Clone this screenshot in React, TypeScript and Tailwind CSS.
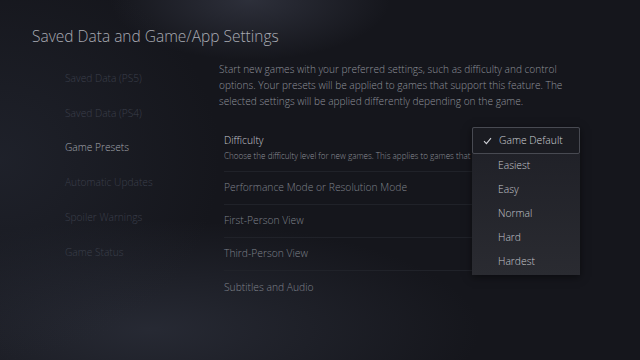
import React from "react";

const nav = [
  { label: "Saved Data (PS5)", active: false },
  { label: "Saved Data (PS4)", active: false },
  { label: "Game Presets", active: true },
  { label: "Automatic Updates", active: false },
  { label: "Spoiler Warnings", active: false },
  { label: "Game Status", active: false },
];

const rows = [
  "Performance Mode or Resolution Mode",
  "First-Person View",
  "Third-Person View",
  "Subtitles and Audio",
];

const options = ["Easiest", "Easy", "Normal", "Hard", "Hardest"];

export default function App() {
  return (
    <div
      className="relative w-[640px] h-[360px] overflow-hidden bg-[#15161c] text-[#b4b6bd] font-light"
      style={{ fontFamily: '"Open Sans", "Noto Sans", sans-serif' }}
    >
      <div className="absolute inset-0 bg-[radial-gradient(ellipse_140px_60px_at_250px_0px,rgba(90,95,115,0.35),transparent)]" />
      <div className="absolute inset-0 bg-[radial-gradient(ellipse_330px_110px_at_150px_330px,rgba(60,65,80,0.45),transparent)]" />
      <div className="absolute inset-0 bg-[radial-gradient(ellipse_220px_200px_at_0px_160px,rgba(40,44,56,0.5),transparent)]" />

      <div className="relative flex flex-col">
        <div className="pl-[32px] pt-[25px] text-[15.5px] font-light leading-[22px] text-[#a9abb3]">
          Saved Data and Game/App Settings
        </div>

        <div className="flex mt-[14px]">
          <div className="w-[219px] pl-[65px] flex flex-col">
            {nav.map((n) => (
              <div
                key={n.label}
                className={`h-[34.8px] flex items-center text-[10.2px] ${
                  n.active ? "text-[#a3a6ae]" : "text-[#3b3f4b]"
                }`}
              >
                {n.label}
              </div>
            ))}
          </div>

          <div className="flex flex-col w-[400px]">
            <div className="text-[10.1px] leading-[16px] text-[#8f929b] w-[400px]">
              Start new games with your preferred settings, such as difficulty and control
              <br />
              options. Your presets will be applied to games that support this feature. The
              <br />
              selected settings will be applied differently depending on the game.
            </div>

            <div className="flex flex-col mt-[15px] pl-[5px] w-[360px]">
              <div className="h-[48px] border-b border-[#202229] flex flex-col pt-[8px]">
                <div className="text-[10.3px] leading-[16px] text-[#c6c8ce]">Difficulty</div>
                <div className="w-[248px] overflow-hidden text-[8.1px] leading-[12px] mt-[2px] text-[#8d9098] whitespace-nowrap">
                  Choose the difficulty level for new games. This applies to games that
                </div>
              </div>
              {rows.map((r, i) => (
                <div
                  key={r}
                  className={`h-[33px] flex items-center text-[10.3px] text-[#7f828b] ${
                    i < rows.length - 1 ? "border-b border-[#202229]" : ""
                  }`}
                >
                  {r}
                </div>
              ))}
            </div>
          </div>
        </div>
      </div>

      <div className="absolute left-[472px] top-[127px] w-[108px] h-[148px] bg-[linear-gradient(180deg,#1e1f26,#2a2b31)] shadow-[0_2px_8px_rgba(0,0,0,0.5)] flex flex-col">
        <div className="h-[27px] border border-[#484a52] rounded-[2px] flex items-center bg-[#1a1b21]">
          <svg width="9" height="8" viewBox="0 0 9 8" className="ml-[10px] mr-[7px]">
            <path d="M1 4.2 L3.4 6.6 L8 1.2" fill="none" stroke="#d0d2d8" strokeWidth="1.1" />
          </svg>
          <span className="text-[10.3px] text-[#d0d2d8]">Game Default</span>
        </div>
        {options.map((o) => (
          <div key={o} className="h-[24px] flex items-center pl-[26px] text-[10.3px] text-[#c4c6cc]">
            {o}
          </div>
        ))}
      </div>
    </div>
  );
}
